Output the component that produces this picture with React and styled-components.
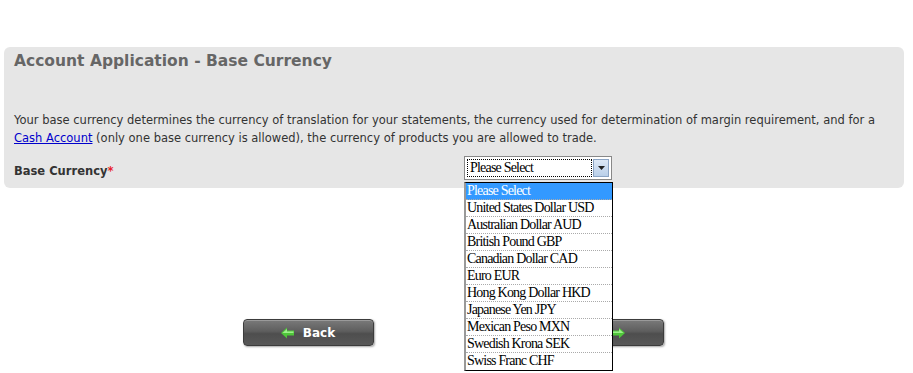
import React from 'react';
import styled, { createGlobalStyle } from 'styled-components';

const currencies = [
	'Please Select',
	'United States Dollar USD',
	'Australian Dollar AUD',
	'British Pound GBP',
	'Canadian Dollar CAD',
	'Euro EUR',
	'Hong Kong Dollar HKD',
	'Japanese Yen JPY',
	'Mexican Peso MXN',
	'Swedish Krona SEK',
	'Swiss Franc CHF',
];

const Arrow = ({ dir }) => (
	<svg width="14" height="12" viewBox="0 0 14 12">
		<g transform={dir === 'left' ? '' : 'translate(14 0) scale(-1 1)'}>
			<polygon points="0,6 6,0.5 6,3.5 13,3.5 13,8.5 6,8.5 6,11.5" fill="#4fc63a" />
			<polygon points="1.5,6 6,2 6,4.5 12.5,4.5 12.5,6" fill="#9df08a" />
		</g>
	</svg>
);

const App = () => (
	<>
		<GlobalStyle />
		<Page>
			<Panel>
				<Title>Account Application - Base Currency</Title>
				<Intro>
					Your base currency determines the currency of translation for your statements, the currency used for determination of margin requirement, and for a{' '}
					<a href="#">Cash Account</a> (only one base currency is allowed), the currency of products you are allowed to trade.
				</Intro>
				<FieldRow>
					<Label>Base Currency<Required>*</Required></Label>
					<SelectWrap>
						<SelectBox>
							<SelectValue>Please Select</SelectValue>
							<SelectButton>
								<svg width="7" height="4" viewBox="0 0 7 4"><polygon points="0,0 7,0 3.5,4" fill="#222" /></svg>
							</SelectButton>
						</SelectBox>
						<OptionList>
							{currencies.map((c, i) => (
								<Option key={c} selected={i === 0}>{c}</Option>
							))}
						</OptionList>
					</SelectWrap>
				</FieldRow>
			</Panel>
			<ButtonBar>
				<NavButton><Arrow dir="left" />Back</NavButton>
				<NavButton>Next<Arrow dir="right" /></NavButton>
			</ButtonBar>
		</Page>
	</>
);

const GlobalStyle = createGlobalStyle`
	body {
		margin: 0;
		background: #fff;
		font-family: Verdana, "DejaVu Sans", sans-serif;
	}
`;

const Page = styled.div`
	width: 904px;
	min-height: 373px;
	box-sizing: border-box;
	padding: 47px 0 0 4px;
`;

const Panel = styled.div`
	background: #e6e6e6;
	border-radius: 6px;
	height: 141px;
	padding: 0 10px;
	box-sizing: border-box;
`;

const Title = styled.h2`
	margin: 0;
	padding-top: 4px;
	font-size: 15.5px;
	line-height: 20px;
	font-weight: bold;
	color: #666;
`;

const Intro = styled.p`
	margin: 40px 0 0;
	font-size: 11.5px;
	line-height: 18px;
	color: #333;
	a {
		color: #0000cc;
	}
`;

const FieldRow = styled.div`
	display: flex;
	align-items: flex-start;
	margin-top: 9px;
`;

const Label = styled.div`
	width: 450px;
	font-size: 11.5px;
	font-weight: bold;
	color: #333;
	padding-top: 8px;
`;

const Required = styled.span`
	color: #e8202a;
`;

const SelectWrap = styled.div`
	position: relative;
`;

const SelectBox = styled.div`
	display: flex;
	align-items: center;
	width: 148px;
	height: 24px;
	box-sizing: border-box;
	border: 1px solid #888;
	background: #fff;
	padding: 2px;
	gap: 1px;
`;

const SelectValue = styled.div`
	flex: 1;
	height: 18px;
	border: 1px dotted #000;
	box-sizing: border-box;
	font-family: "Liberation Serif", serif;
	font-size: 14px;
	line-height: 16px;
	padding-left: 2px;
	letter-spacing: -0.8px;
`;

const SelectButton = styled.div`
	width: 16px;
	height: 18px;
	box-sizing: border-box;
	border: 1px solid #8ba4c4;
	background: linear-gradient(#dde8f6, #b9cfe9);
	display: flex;
	align-items: center;
	justify-content: center;
`;

const OptionList = styled.div`
	position: absolute;
	top: 26px;
	left: 0;
	width: 149px;
	box-sizing: border-box;
	background: #fff;
	border: 1px solid #000;
	border-left: 2px solid #999;
	z-index: 5;
`;

const Option = styled.div`
	height: 17px;
	box-sizing: border-box;
	font-family: "Liberation Serif", serif;
	font-size: 14px;
	line-height: 16px;
	letter-spacing: -0.8px;
	padding-left: 1px;
	white-space: nowrap;
	background: ${props => (props.selected ? '#3399ff' : '#fff')};
	color: ${props => (props.selected ? '#fff' : '#000')};
	border-bottom: 1px dotted #aaa;
	&:last-child {
		border-bottom: 0;
	}
`;

const ButtonBar = styled.div`
	display: flex;
	justify-content: center;
	gap: 159px;
	margin-top: 131px;
	padding-right: 2px;
`;

const NavButton = styled.button`
	width: 131px;
	height: 27px;
	display: flex;
	align-items: center;
	justify-content: center;
	gap: 8px;
	border: 1px solid #3c3c3c;
	border-radius: 4px;
	background: linear-gradient(#7a7a7a 0%, #5e5e5e 45%, #4e4e4e 55%, #585858 100%);
	box-shadow: inset 0 1px 0 #9a9a9a, 1px 1px 2px rgba(0, 0, 0, 0.35);
	color: #fff;
	font-family: Verdana, "DejaVu Sans", sans-serif;
	font-size: 12px;
	font-weight: bold;
	padding: 0;
`;

export default App;
